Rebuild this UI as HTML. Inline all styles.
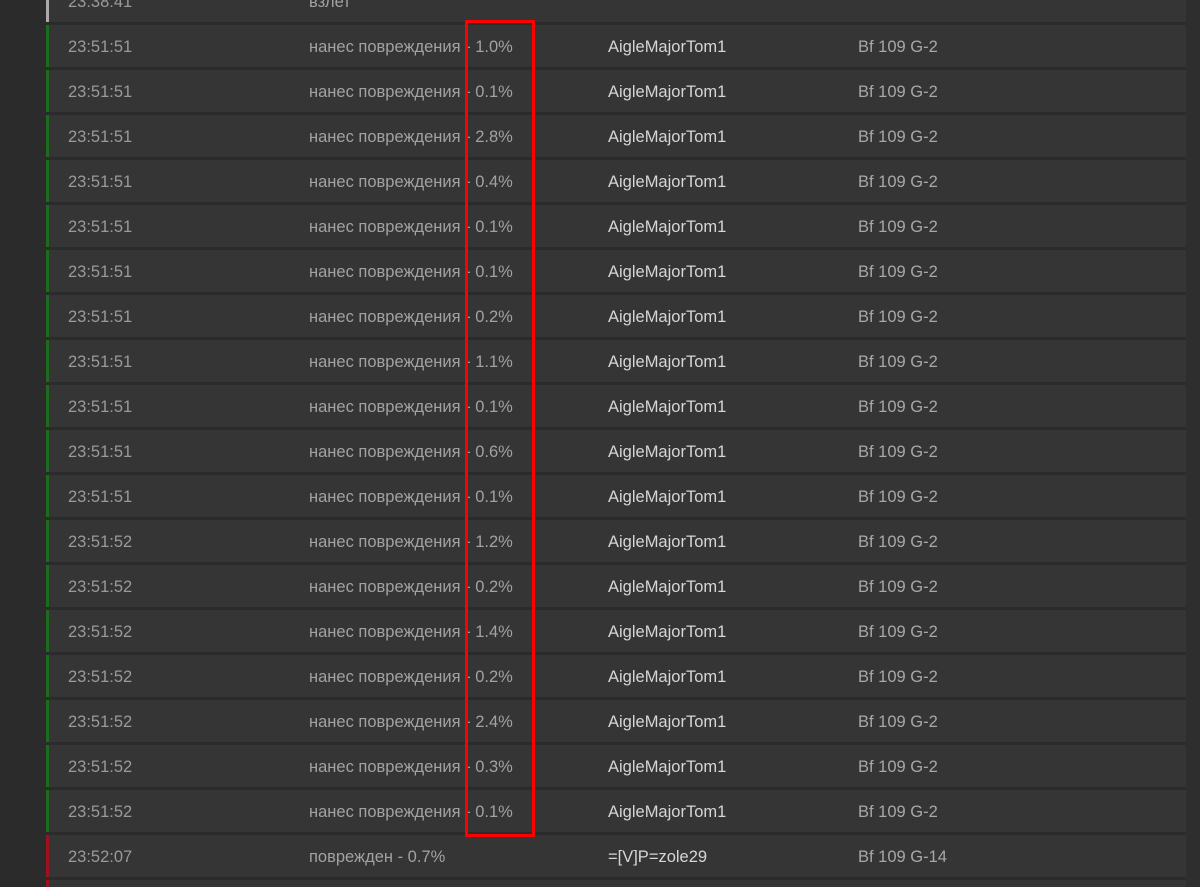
<!DOCTYPE html>
<html><head><meta charset="utf-8"><style>
html,body{margin:0;height:887px;overflow:hidden}
body{width:1200px;background:#2b2b2b;position:relative;font-family:"Liberation Sans","DejaVu Sans",sans-serif;font-size:16.5px}
.r{position:absolute;left:46px;width:1140px;height:42px;background:#353535;border-left:3px solid #1d6b1d;box-sizing:border-box}
.r span{position:absolute;top:12px;line-height:20px;white-space:nowrap}
.t{left:19px;color:#9a9a9a}.e{left:260px;color:#a2a2a2}.p{left:559px;color:#d6d6d6}.a{left:809px;color:#a8a8a8}
.g{border-left-color:#aaa}.red{border-left-color:#9e1220}
.box{position:absolute;left:465px;top:20px;width:70px;height:817px;border:3px solid #f00;box-sizing:border-box}
.side{position:absolute;left:1186px;top:0;width:14px;height:887px;background:#2e2e2e}
</style></head><body>
<div class="side"></div>
<div class="r g" style="top:-20px"><span class="t">23:38:41</span><span class="e">взлет</span></div>
<div class="r" style="top:25px"><span class="t">23:51:51</span><span class="e">нанес повреждения - 1.0%</span><span class="p">AigleMajorTom1</span><span class="a">Bf 109 G-2</span></div>
<div class="r" style="top:70px"><span class="t">23:51:51</span><span class="e">нанес повреждения - 0.1%</span><span class="p">AigleMajorTom1</span><span class="a">Bf 109 G-2</span></div>
<div class="r" style="top:115px"><span class="t">23:51:51</span><span class="e">нанес повреждения - 2.8%</span><span class="p">AigleMajorTom1</span><span class="a">Bf 109 G-2</span></div>
<div class="r" style="top:160px"><span class="t">23:51:51</span><span class="e">нанес повреждения - 0.4%</span><span class="p">AigleMajorTom1</span><span class="a">Bf 109 G-2</span></div>
<div class="r" style="top:205px"><span class="t">23:51:51</span><span class="e">нанес повреждения - 0.1%</span><span class="p">AigleMajorTom1</span><span class="a">Bf 109 G-2</span></div>
<div class="r" style="top:250px"><span class="t">23:51:51</span><span class="e">нанес повреждения - 0.1%</span><span class="p">AigleMajorTom1</span><span class="a">Bf 109 G-2</span></div>
<div class="r" style="top:295px"><span class="t">23:51:51</span><span class="e">нанес повреждения - 0.2%</span><span class="p">AigleMajorTom1</span><span class="a">Bf 109 G-2</span></div>
<div class="r" style="top:340px"><span class="t">23:51:51</span><span class="e">нанес повреждения - 1.1%</span><span class="p">AigleMajorTom1</span><span class="a">Bf 109 G-2</span></div>
<div class="r" style="top:385px"><span class="t">23:51:51</span><span class="e">нанес повреждения - 0.1%</span><span class="p">AigleMajorTom1</span><span class="a">Bf 109 G-2</span></div>
<div class="r" style="top:430px"><span class="t">23:51:51</span><span class="e">нанес повреждения - 0.6%</span><span class="p">AigleMajorTom1</span><span class="a">Bf 109 G-2</span></div>
<div class="r" style="top:475px"><span class="t">23:51:51</span><span class="e">нанес повреждения - 0.1%</span><span class="p">AigleMajorTom1</span><span class="a">Bf 109 G-2</span></div>
<div class="r" style="top:520px"><span class="t">23:51:52</span><span class="e">нанес повреждения - 1.2%</span><span class="p">AigleMajorTom1</span><span class="a">Bf 109 G-2</span></div>
<div class="r" style="top:565px"><span class="t">23:51:52</span><span class="e">нанес повреждения - 0.2%</span><span class="p">AigleMajorTom1</span><span class="a">Bf 109 G-2</span></div>
<div class="r" style="top:610px"><span class="t">23:51:52</span><span class="e">нанес повреждения - 1.4%</span><span class="p">AigleMajorTom1</span><span class="a">Bf 109 G-2</span></div>
<div class="r" style="top:655px"><span class="t">23:51:52</span><span class="e">нанес повреждения - 0.2%</span><span class="p">AigleMajorTom1</span><span class="a">Bf 109 G-2</span></div>
<div class="r" style="top:700px"><span class="t">23:51:52</span><span class="e">нанес повреждения - 2.4%</span><span class="p">AigleMajorTom1</span><span class="a">Bf 109 G-2</span></div>
<div class="r" style="top:745px"><span class="t">23:51:52</span><span class="e">нанес повреждения - 0.3%</span><span class="p">AigleMajorTom1</span><span class="a">Bf 109 G-2</span></div>
<div class="r" style="top:790px"><span class="t">23:51:52</span><span class="e">нанес повреждения - 0.1%</span><span class="p">AigleMajorTom1</span><span class="a">Bf 109 G-2</span></div>
<div class="r red" style="top:835px"><span class="t">23:52:07</span><span class="e">поврежден - 0.7%</span><span class="p">=[V]P=zole29</span><span class="a">Bf 109 G-14</span></div>
<div class="r red" style="top:880px;height:7px"></div>
<div class="box"></div>
</body></html>
